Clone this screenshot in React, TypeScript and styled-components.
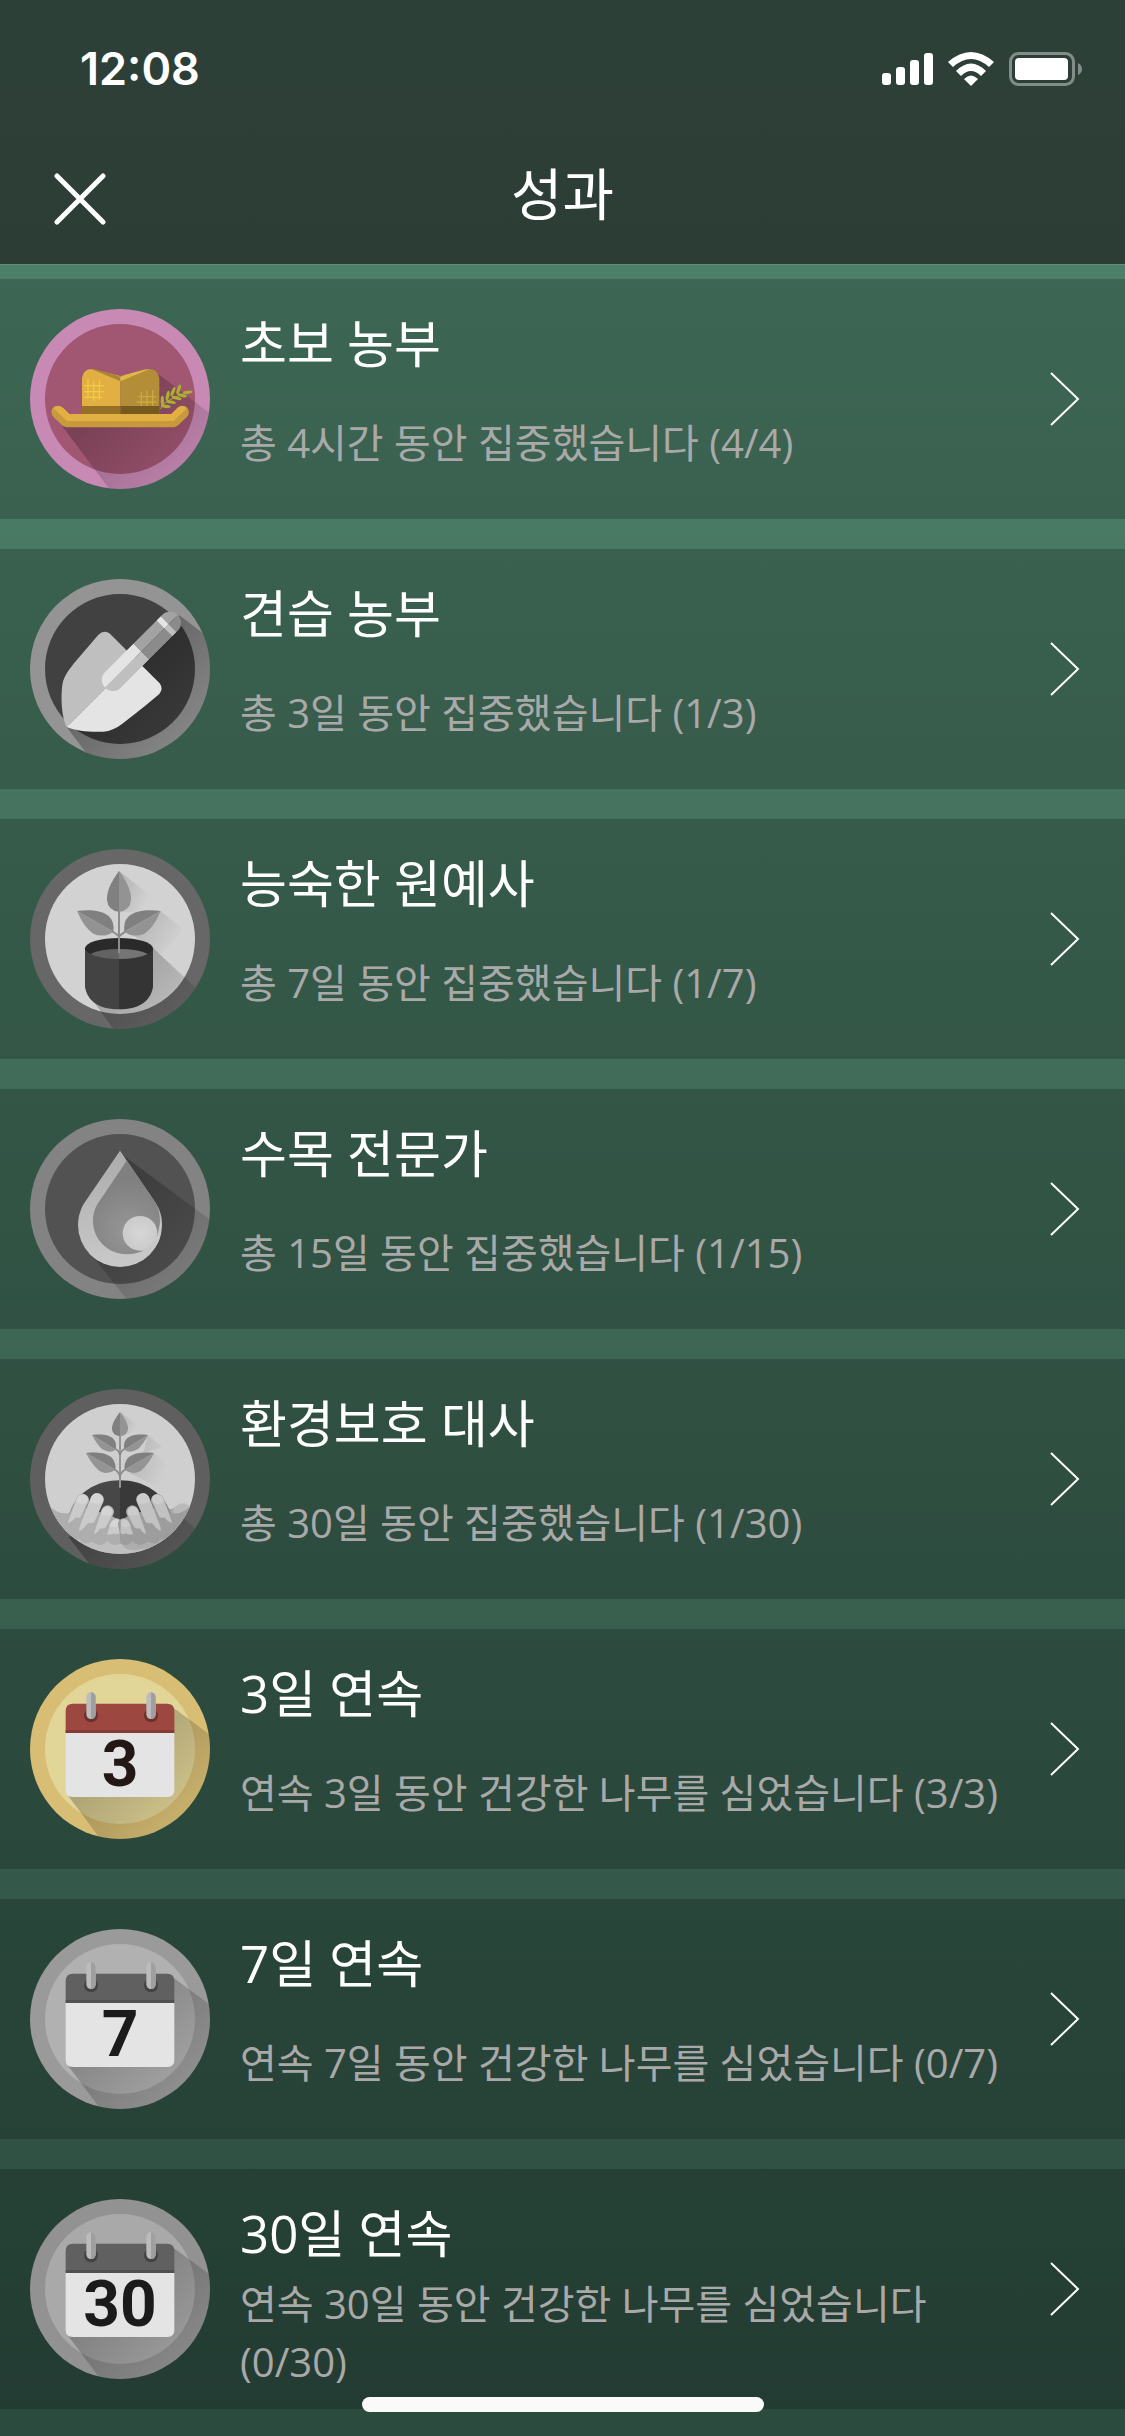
import React from "react";
import styled, { createGlobalStyle } from "styled-components";

const GlobalStyle = createGlobalStyle`
  *, *::before, *::after { box-sizing: border-box; }
  body {
    margin: 0;
    background: #2c4b3f;
    color: #fff;
    font-family: "Open Sans", "Noto Sans CJK KR", sans-serif;
    font-weight: 400;
  }
`;

const Page = styled.div`
  display: flex;
  flex-direction: column;
  min-height: 100vh;
  background: linear-gradient(180deg, #50876f 0%, #4d8069 11%, #2c4b3f 100%);
`;

const Header = styled.header`
  background: linear-gradient(180deg, #2d4038, #2c3d36);
  border-bottom: 1px solid #5f917c;
`;

const StatusBar = styled.div`
  display: flex;
  align-items: center;
  justify-content: space-between;
  height: 138px;
  padding: 0 43px 0 80px;
`;

const Time = styled.time`
  font-family: Inter, "Liberation Sans", sans-serif;
  font-size: 45px;
  font-weight: 600;
  line-height: 52px;
`;

const StatusIcons = styled.div`
  display: flex;
  align-items: center;
  gap: 15px;
`;

const NavBar = styled.div`
  display: grid;
  grid-template-columns: 96px 1fr 96px;
  align-items: center;
  height: 126px;
  padding: 0 32px 4px;
`;

const CloseButton = styled.button`
  display: grid;
  place-items: center start;
  width: 96px;
  height: 96px;
  padding: 0 0 0 22px;
  border: 0;
  background: none;
  color: inherit;
`;

const CloseGlyph = styled.svg`
  width: 52px;
  height: 52px;
`;

const PageTitle = styled.h1`
  margin: 0;
  padding-bottom: 12px;
  font-size: 56px;
  font-weight: 400;
  line-height: 72px;
  text-align: center;
`;

const List = styled.ul`
  display: flex;
  flex-direction: column;
  gap: 30px;
  margin: 0;
  padding: 14px 0 27px;
  list-style: none;
`;

const Row = styled.a`
  display: flex;
  align-items: center;
  gap: 30px;
  min-height: 240px;
  padding: 0 45px 0 30px;
  background: rgba(0, 0, 0, 0.2);
  color: inherit;
  text-decoration: none;
`;

const Badge = styled.svg`
  flex: none;
  width: 180px;
  height: 180px;
`;

const Texts = styled.div`
  display: flex;
  flex: 1;
  flex-direction: column;
  min-width: 0;
  padding: 18px 0 0;
`;

const Name = styled.h2`
  margin: 0;
  font-size: 51px;
  font-weight: 400;
  line-height: 70px;
`;

const Detail = styled.p`
  display: flex;
  align-items: center;
  min-height: 130px;
  margin: 0;
  color: #a9a9a9;
  font-size: 40px;
  line-height: 58px;
  word-break: keep-all;
`;

const Chevron = styled.svg`
  flex: none;
  width: 30px;
  height: 54px;
`;

const HomeIndicator = styled.div`
  position: fixed;
  bottom: 24px;
  left: 50%;
  width: 402px;
  height: 15px;
  border-radius: 8px;
  background: #fafafa;
  transform: translateX(-50%);
`;

/* Every badge is drawn in a space whose medal is centred on (360, 357). */
type MedalProps = {
  id: string;
  label: string;
  ring: string;
  face: string;
  shadow: string;
  strength?: number;
  children: React.ReactNode;
};

function Medal({ id, label, ring, face, shadow, strength = 0.28, children }: MedalProps) {
  return (
    <Badge viewBox="90 87 540 540" role="img" aria-label={label}>
      <defs>
        <clipPath id={`${id}-disc`}>
          <circle cx="360" cy="357" r="270" />
        </clipPath>
        <clipPath id={`${id}-face`}>
          <circle cx="360" cy="357" r="225" />
        </clipPath>
        <linearGradient id={`${id}-shade`} gradientUnits="userSpaceOnUse" x1="300" y1="400" x2="510" y2="610">
          <stop offset="0" stopColor="#000" stopOpacity={strength} />
          <stop offset="1" stopColor="#000" stopOpacity={strength * 0.3} />
        </linearGradient>
      </defs>
      <circle cx="360" cy="357" r="270" fill={ring} />
      <circle cx="360" cy="357" r="225" fill={face} />
      <path d={shadow} fill={`url(#${id}-shade)`} clipPath={`url(#${id}-disc)`} />
      {children}
    </Badge>
  );
}

function HatBadge() {
  const leaves = [
    [487, 362, 0], [503, 347, 12], [519, 335, 22], [536, 328, 20],
    [497, 379, 96], [513, 366, 103], [530, 354, 104], [546, 346, 104], [563, 337, 84],
  ];
  return (
    <Medal id="hat" label="밀짚모자" ring="#c889b5" face="#a15672" strength={0.24}
      shadow="M188 440 L330 630 H640 V408 L475 282 V380 Z">
      <path d="M481 387 Q490 358 570 337" fill="none" stroke="#a9a82f" strokeWidth="3" />
      {leaves.map(([x, y, r]) => (
        <ellipse key={`${x}-${y}`} cx={x} cy={y} rx="5" ry="15" fill="#abb033" transform={`rotate(${r} ${x} ${y})`} />
      ))}
      <path d="M246 402 V295 Q248 269 274 267 L361 288 V402 Z" fill="#e2b042" />
      <path d="M478 402 V295 Q475 269 449 267 L361 288 V402 Z" fill="#b38d37" />
      <path d="M274 267 Q285 266 361 290 V304 Z" fill="#a98634" />
      <path d="M449 267 Q430 267 361 290 V304 Z" fill="#dfb84a" />
      <path d="M246 378 H361 V402 H246 Z" fill="#957027" />
      <path d="M361 378 H478 V402 H361 Z" fill="#76591e" />
      <path d="M264 297 V354 M281 303 V362 M298 302 V358 M252 317 H312 M252 335 H312 M252 352 H306"
        fill="none" stroke="#f1cb43" strokeWidth="4" />
      <path d="M424 335 V377 M441 332 V377 M458 330 V377 M415 350 H469 M410 366 H469"
        fill="none" stroke="#ceaa3e" strokeWidth="4" />
      <path d="M174 397 L200 422 H521 L547 397" fill="none" stroke="#c9993d" strokeWidth="39" strokeLinecap="round" strokeLinejoin="round" />
      <path d="M155 398 Q155 379 174 378 Q183 378 190 384 L208 402 H514 L532 384 Q540 377 549 378 Q558 380 561 385 L521 423 H201 L160 385 Z" fill="#e2b042" />
    </Medal>
  );
}

function TrowelBadge() {
  return (
    <Medal id="trowel" label="모종삽" ring="#949494" face="#414141" strength={0.32}
      shadow="M538 196 L640 273 V640 H282 L200 531 Z">
      <path d="M200 531 C184 500 182 440 187 405 C190 382 207 359 222 340 L294 256 Q311 238 330 251 L405 326 Z" fill="#bfbfbf" />
      <path d="M200 531 L405 326 L479 400 Q491 416 478 432 C440 465 400 496 367 521 Q340 542 310 545 C270 547 230 543 200 531 Z" fill="#e4e4e4" />
      <clipPath id="trowel-grip">
        <rect x="-154" y="-33" width="308" height="67" rx="33" />
      </clipPath>
      <g transform="translate(424 304) rotate(-45)">
        <g clipPath="url(#trowel-grip)">
          <path d="M-154 -34 H0 V0 H-154 Z" fill="#e4e4e4" />
          <path d="M-154 0 H0 V34 H-154 Z" fill="#bfbfbf" />
          <path d="M0 -34 H154 V0 H0 Z" fill="#a3a3a3" />
          <path d="M0 0 H154 V34 H0 Z" fill="#8b8b8b" />
          <path d="M98 -34 H115 V0 H98 Z" fill="#e4e4e4" />
          <path d="M98 0 H115 V34 H98 Z" fill="#bfbfbf" />
        </g>
      </g>
    </Medal>
  );
}

function PotBadge() {
  return (
    <Medal id="pot" label="화분" ring="#676767" face="#d2d2d2" strength={0.3}
      shadow="M459 384 L590 506 L640 560 V640 H350 L270 530 Z">
      <defs>
        <linearGradient id="pot-leafshade" x1="0" y1="0" x2="1" y2="0.600">
          <stop offset="0" stopColor="#000" stopOpacity="0.160" />
          <stop offset="1" stopColor="#000" stopOpacity="0" />
        </linearGradient>
      </defs>
      <path d="M357 153 L450 225 L420 275 H357 Z" fill="url(#pot-leafshade)" />
      <path d="M481 273 L550 326 L485 405 L400 346 Z" fill="url(#pot-leafshade)" />
      <path d="M255 386 V500 C262 545 300 568 357 568 V386 Z" fill="#434343" />
      <path d="M459 386 V500 C452 545 414 568 357 568 V386 Z" fill="#343434" />
      <ellipse cx="357" cy="385" rx="102" ry="31" fill="#2a2a2a" />
      <path d="M271 402 Q300 387 357 387 V417 Q300 417 271 402 Z" fill="#626262" />
      <path d="M443 402 Q414 387 357 387 V417 Q414 417 443 402 Z" fill="#757575" />
      <path d="M357 265 V400 M357 352 Q356 345 336 334 M357 352 Q358 345 380 333" fill="none" stroke="#8d8d8d" strokeWidth="6" />
      <path d="M357 153 C330 190 320 215 321 240 Q324 272 357 275 Z" fill="#808080" />
      <path d="M357 153 C384 190 394 215 393 240 Q390 272 357 275 Z" fill="#939393" />
      <path d="M231 273 C280 267 310 274 328 290 Q344 306 340 335 Z" fill="#808080" />
      <path d="M231 273 Q252 323 280 341 Q312 355 340 335 Z" fill="#939393" />
      <path d="M482 273 C433 267 403 274 385 290 Q369 306 373 335 Z" fill="#808080" />
      <path d="M482 273 Q461 323 433 341 Q401 355 373 335 Z" fill="#939393" />
    </Medal>
  );
}

function DropBadge() {
  return (
    <Medal id="drop" label="물방울" ring="#838383" face="#525252" strength={0.24}
      shadow="M375 200 L640 397 V640 H390 L285 508 Z">
      <defs>
        <linearGradient id="drop-rim" gradientUnits="userSpaceOnUse" x1="340" y1="190" x2="360" y2="530">
          <stop offset="0" stopColor="#acacac" />
          <stop offset="1" stopColor="#c9c9c9" />
        </linearGradient>
        <radialGradient id="drop-core" gradientUnits="userSpaceOnUse" cx="385" cy="420" r="150">
          <stop offset="0" stopColor="#969696" />
          <stop offset="1" stopColor="#808080" />
        </radialGradient>
        <radialGradient id="drop-shine">
          <stop offset="0" stopColor="#d6d6d6" />
          <stop offset="1" stopColor="#cbcbcb" />
        </radialGradient>
      </defs>
      <path d="M360 182 L465 336 C479 357 486 378 486 405 A126 126 0 0 1 234 405 C234 378 243 354 255 336 Z" fill="url(#drop-rim)" />
      <path d="M380 212 L465 336 C480 360 486 396 472 438 L430 482 C350 516 279 462 279 392 C279 365 289 346 302 328 Z" fill="url(#drop-core)" />
      <circle cx="420" cy="430" r="52" fill="url(#drop-shine)" />
      <path d="M428 480 Q459 466 472 438 L483 390 Q488 430 474 458 Q458 488 428 505 Z" fill="#c8c8c8" />
    </Medal>
  );
}

function Sprig({ flip }: { flip?: boolean }) {
  return (
    <g transform={flip ? "translate(720 0) scale(-1 1)" : undefined}>
      <path d="M276 225 C310 221 333 226 343 240 Q351 252 347 269 Z" fill="#808080" />
      <path d="M276 225 Q290 253 307 268 Q330 282 347 269 Z" fill="#949494" />
      <path d="M258 279 C297 275 325 281 338 296 Q349 311 346 329 Z" fill="#808080" />
      <path d="M258 279 Q275 313 297 332 Q322 347 346 329 Z" fill="#949494" />
      <path d="M343 265 Q358 272 360 286 M340 326 Q359 335 360 352" fill="none" stroke="#8a8a8a" strokeWidth="5" />
    </g>
  );
}

function Hand({ flip }: { flip?: boolean }) {
  const palm = flip ? "#9d9d9d" : "#aeaeae";
  const finger = flip ? "#c2c2c2" : "#cbcbcb";
  return (
    <g transform={flip ? "translate(720 0) scale(-1 1)" : undefined}>
      <path d="M150 440 Q180 466 208 458 L200 520 L170 490 Z" fill={palm} />
      <path d="M198 490 Q218 455 250 440 L340 470 Q362 482 360 500 V550 Q340 562 322 543 Q300 566 276 544 Q252 560 238 538 Q216 540 198 512 Z" fill={palm} />
      <g stroke={palm} fill="none" strokeLinecap="round" strokeWidth="38">
        <path d="M248 421 L222 474 M291 418 L260 490 M323 455 L302 500 M347 493 L340 520" />
      </g>
      <g fill={finger}>
        <path d="M231 413 Q243 398 256 404 Q268 410 264 423 L242 470 Q235 476 228 472 Q220 483 203 490 Z" />
        <path d="M272 415 Q280 396 298 401 Q315 408 310 425 L283 487 Q273 492 264 488 Q254 505 238 514 Q236 505 243 490 Z" />
        <path d="M306 450 Q315 434 330 440 Q343 449 336 466 L317 502 Q308 509 300 505 Q294 519 281 522 Z" />
        <path d="M333 488 Q341 472 358 479 V519 Q350 526 343 520 Q332 526 321 522 Z" />
      </g>
      <g fill={flip ? "#cccccc" : "#d5d5d5"}>
        <path d="M233 411 Q245 400 257 406 Q267 413 261 427 Q247 437 229 426 Z" />
        <path d="M274 412 Q283 397 298 402 Q313 409 307 428 Q290 436 270 426 Z" />
        <path d="M308 448 Q317 436 330 442 Q340 450 334 464 Q321 471 303 463 Z" />
        <path d="M334 486 Q342 474 356 480 L355 499 Q344 504 328 499 Z" />
      </g>
    </g>
  );
}

function HandsBadge() {
  return (
    <Medal id="hands" label="새싹을 받친 두 손" ring="#5f5f5f" face="#cfcfcf" strength={0.34}
      shadow="M520 445 L640 558 V640 H290 L205 530 Z">
      <defs>
        <linearGradient id="hands-leafshade" x1="0" y1="0" x2="1" y2="0.500">
          <stop offset="0" stopColor="#000" stopOpacity="0.130" />
          <stop offset="1" stopColor="#000" stopOpacity="0" />
        </linearGradient>
      </defs>
      <path d="M360 156 L418 200 L384 222 H360 Z" fill="url(#hands-leafshade)" />
      <path d="M443 225 L486 260 L430 280 Z M461 279 L510 319 L470 380 L390 340 Z" fill="url(#hands-leafshade)" />
      <g clipPath="url(#hands-face)">
        <path d="M205 470 C225 398 290 361 360 361 V510 H205 Z" fill="#474747" />
        <path d="M515 470 C495 398 430 361 360 361 V510 H515 Z" fill="#393939" />
        <path d="M520 445 Q550 415 575 445 L520 510 Z" fill="#bababa" />
        <path d="M190 500 H530 V590 H190 Z" fill="#bfbfbf" />
        <path d="M360 540 Q370 580 420 568 Q480 565 530 510 L500 490 H360 Z" fill="#adadad" />
        <Hand />
        <Hand flip />
      </g>
      <path d="M360 220 V383" stroke="#959595" strokeWidth="6" />
      <Sprig />
      <Sprig flip />
      <path d="M360 156 C342 180 335 195 336 208 Q338 227 360 229 Z" fill="#808080" />
      <path d="M360 156 C378 180 385 195 384 208 Q382 227 360 229 Z" fill="#949494" />
    </Medal>
  );
}

const DayText = styled.text`
  fill: ${(p) => p.color};
  font-family: Roboto, "Liberation Sans", sans-serif;
  font-size: 192px;
  font-weight: 700;
  text-anchor: middle;
`;

type CalendarProps = { days: string; gold?: boolean; ring?: string; face?: string };

function CalendarBadge({ days, gold, ring = "#9a9a9a", face = "#b1b1b1" }: CalendarProps) {
  const top = gold ? "#9c4740" : "#606060";
  const fold = gold ? "#843b36" : "#505050";
  const hole = gold ? "#6e302d" : "#434343";
  return (
    <Medal id={`cal${days}`} label={`${days}일 달력`} ring={gold ? "#d8be74" : ring} face={gold ? "#e2d598" : face}
      strength={0.24} shadow="M520 233 L640 322 V640 H311 L205 498 Z">
      <path d="M197 300 H523 V480 Q523 501 502 501 H218 Q197 501 197 480 Z" fill="#e4e4e4" />
      <path d="M197 309 V243 Q197 221 219 221 H501 Q523 221 523 243 V309 Z" fill={top} />
      <path d="M197 300 H523 V309 H197 Z" fill={fold} />
      {[273, 453].map((x) => (
        <g key={x}>
          <circle cx={x} cy="256" r="21" fill={hole} />
          <rect x={x - 14} y="187" width="28" height="80" rx="14" fill="#bcbcbc" />
          <path d={`M${x} 187 a14 14 0 0 1 14 14 V253 a14 14 0 0 1 -14 14 Z`} fill="#9f9f9f" />
        </g>
      ))}
      <DayText x="360" y="469" color={gold ? "#231815" : "#1b1b1b"}>{days}</DayText>
    </Medal>
  );
}

const achievements = [
  { id: "novice", name: "초보 농부", detail: "총 4시간 동안 집중했습니다 (4/4)", badge: <HatBadge /> },
  { id: "apprentice", name: "견습 농부", detail: "총 3일 동안 집중했습니다 (1/3)", badge: <TrowelBadge /> },
  { id: "gardener", name: "능숙한 원예사", detail: "총 7일 동안 집중했습니다 (1/7)", badge: <PotBadge /> },
  { id: "arborist", name: "수목 전문가", detail: "총 15일 동안 집중했습니다 (1/15)", badge: <DropBadge /> },
  { id: "ambassador", name: "환경보호 대사", detail: "총 30일 동안 집중했습니다 (1/30)", badge: <HandsBadge /> },
  { id: "streak-3", name: "3일 연속", detail: "연속 3일 동안 건강한 나무를 심었습니다 (3/3)", badge: <CalendarBadge days="3" gold /> },
  { id: "streak-7", name: "7일 연속", detail: "연속 7일 동안 건강한 나무를 심었습니다 (0/7)", badge: <CalendarBadge days="7" /> },
  { id: "streak-30", name: "30일 연속", detail: "연속 30일 동안 건강한 나무를 심었습니다 (0/30)", badge: <CalendarBadge days="30" ring="#929292" face="#a9a9a9" /> },
];

function SignalIcon() {
  return (
    <svg width="51" height="34" viewBox="0 0 51 34" fill="#fff" aria-hidden="true">
      <rect x="0" y="21" width="9" height="12" rx="3" />
      <rect x="14" y="15" width="9" height="18" rx="3" />
      <rect x="28" y="8" width="9" height="25" rx="3" />
      <rect x="42" y="1" width="9" height="32" rx="3" />
    </svg>
  );
}

function WifiIcon() {
  return (
    <svg width="46" height="34" viewBox="0 0 46 34" fill="#fff" aria-hidden="true">
      <path d="M0 10 Q23 -10 46 10 L41 15 Q23 -1 5 15 Z" />
      <path d="M8 19 Q23 4 38 19 L33 24 Q23 14 13 24 Z" />
      <path d="M16 27 Q23 20 30 27 L23 34 Z" />
    </svg>
  );
}

function BatteryIcon() {
  return (
    <svg width="73" height="34" viewBox="0 0 73 34" aria-hidden="true">
      <rect x="1.500" y="1.500" width="63" height="31" rx="8" fill="none" stroke="#808d88" strokeWidth="3" />
      <rect x="6" y="6" width="53" height="22" rx="4" fill="#fff" />
      <path d="M69 11 Q73 13 73 17 Q73 21 69 23 Z" fill="#808d88" />
    </svg>
  );
}

export default function App() {
  return (
    <Page>
      <GlobalStyle />
      <Header>
        <StatusBar>
          <Time>12:08</Time>
          <StatusIcons>
            <SignalIcon />
            <WifiIcon />
            <BatteryIcon />
          </StatusIcons>
        </StatusBar>
        <NavBar>
          <CloseButton type="button" aria-label="닫기">
            <CloseGlyph viewBox="0 0 52 52" fill="none" stroke="currentColor" strokeWidth="5" strokeLinecap="round">
              <path d="M3 3 L49 49 M49 3 L3 49" />
            </CloseGlyph>
          </CloseButton>
          <PageTitle>성과</PageTitle>
        </NavBar>
      </Header>
      <main>
        <List>
          {achievements.map((item) => (
            <li key={item.id}>
              <Row href={`#${item.id}`}>
                {item.badge}
                <Texts>
                  <Name>{item.name}</Name>
                  <Detail>{item.detail}</Detail>
                </Texts>
                <Chevron viewBox="0 0 30 54" fill="none" stroke="#fff" strokeWidth="2" aria-hidden="true">
                  <path d="M1 1 L28 27 L1 53" />
                </Chevron>
              </Row>
            </li>
          ))}
        </List>
      </main>
      <HomeIndicator />
    </Page>
  );
}
